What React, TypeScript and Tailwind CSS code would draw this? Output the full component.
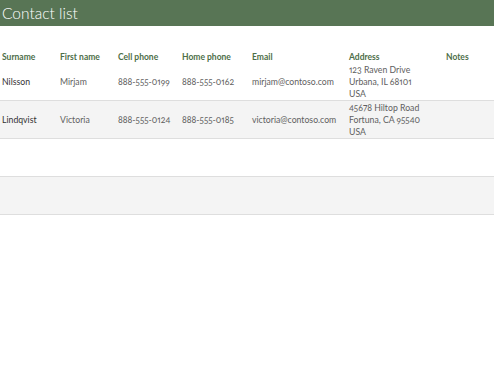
import React from "react";

const cols = "grid grid-cols-[58px_58px_64px_70px_97px_97px_50px]";

type Row = {
  surname: string;
  first: string;
  cell: string;
  home: string;
  email: string;
  address: string[];
};

const rows: (Row | null)[] = [
  {
    surname: "Nilsson",
    first: "Mirjam",
    cell: "888-555-0199",
    home: "888-555-0162",
    email: "mirjam@contoso.com",
    address: ["123 Raven Drive", "Urbana, IL 68101", "USA"],
  },
  {
    surname: "Lindqvist",
    first: "Victoria",
    cell: "888-555-0124",
    home: "888-555-0185",
    email: "victoria@contoso.com",
    address: ["45678 Hiltop Road", "Fortuna, CA 95540", "USA"],
  },
  null,
  null,
];

export default function App() {
  return (
    <div
      className="w-[498px] h-[382px] bg-white"
      style={{ fontFamily: "Lato, 'Open Sans', sans-serif" }}
    >
      <div className="w-[494px]">
        <div className="h-[26px] bg-[#587555] flex items-center pl-[2px] pt-[1px]">
          <span className="text-white text-[15.5px] font-light leading-none">
            Contact list
          </span>
        </div>
        <div className={`${cols} h-[37px] items-end pb-0 text-[8.5px] leading-[12px] font-bold text-[#4d6e48]`}>
          <div className="pl-[2px]">Surname</div>
          <div className="pl-[2px]">First name</div>
          <div className="pl-[2px]">Cell phone</div>
          <div className="pl-[2px]">Home phone</div>
          <div className="pl-[2px]">Email</div>
          <div className="pl-[2px]">Address</div>
          <div className="pl-[2px]">Notes</div>
        </div>
        {rows.map((r, i) => (
          <div
            key={i}
            className={`${cols} h-[38px] items-center border-b border-[#dedede] text-[8.7px] leading-[12px] text-[#606060] oldstyle-nums proportional-nums ${
              i % 2 === 1 ? "bg-[#f4f4f4]" : "bg-white"
            }`}
          >
            {r ? (
              <>
                <div className="pl-[2px] text-[#333333]">{r.surname}</div>
                <div className="pl-[2px]">{r.first}</div>
                <div className="pl-[2px]">{r.cell}</div>
                <div className="pl-[2px]">{r.home}</div>
                <div className="pl-[2px]">{r.email}</div>
                <div className="pl-[2px] flex flex-col">
                  {r.address.map((a) => (
                    <span key={a}>{a}</span>
                  ))}
                </div>
                <div className="pl-[2px]"></div>
              </>
            ) : null}
          </div>
        ))}
      </div>
    </div>
  );
}
